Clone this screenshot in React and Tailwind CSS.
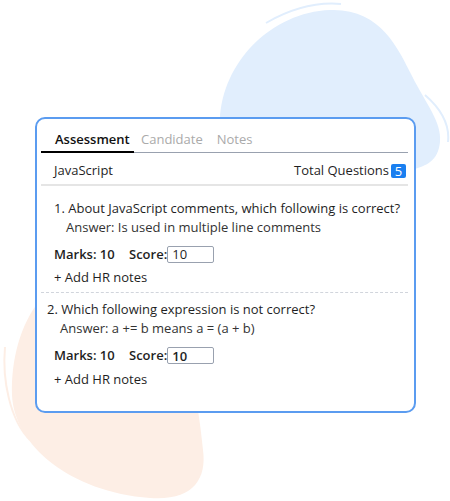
import React from 'react';

const questions = [
    {
        id: 1,
        text: '1. About JavaScript comments, which following is correct?',
        answer: 'Answer: Is used in multiple line comments',
        marks: 10,
        score: '10',
        qPad: 'pl-[13px]',
        aPad: 'pl-[25px]',
    },
    {
        id: 2,
        text: '2. Which following expression is not correct?',
        answer: 'Answer: a += b means a = (a + b)',
        marks: 10,
        score: '10',
        qPad: 'pl-[6px]',
        aPad: 'pl-[19px]',
        bold: true,
    },
];

const Blobs = () => (
    <svg className="absolute inset-0 pointer-events-none" width="450" height="501" viewBox="0 0 450 501">
        {/* blue blob */}
        <path
            d="M220 120 C222 62 272 12 330 10 C380 8 398 48 412 76 C426 104 442 122 440 142 C438 160 428 166 410 170 L230 170 Z"
            fill="#e1eefd"
        />
        <path d="M266 23 C292 8 318 2 341 4" stroke="#e1eefd" strokeWidth="2" fill="none" />
        <path d="M425 95 C440 108 450 124 448 142" stroke="#e1eefd" strokeWidth="2" fill="none" />

        {/* peach blob */}
        <path
            d="M40 300 C20 325 11 360 12 395 C14 445 70 492 150 498 C192 501 207 480 203 450 C200 420 196 395 190 370 C184 340 170 310 150 300 Z"
            fill="#fdeee5"
        />
        <path d="M5 347 C2 380 10 420 30 440" stroke="#fdeee5" strokeWidth="2" fill="none" />
    </svg>
);

const QuestionBlock = ({ q, first, last }) => (
    <div className={`${first ? 'pt-[13px]' : 'pt-[7px]'} ${last ? 'pb-[22px]' : 'pb-[5px] border-b border-dashed border-gray-300'}`}>
        <div className={`${q.qPad} text-[13px] leading-[19px] text-[#1f1f1f]`}>{q.text}</div>
        <div className={`${q.aPad} text-[13px] leading-[19px] text-[#333]`}>{q.answer}</div>

        <div className="pl-[13px] mt-[8px] flex items-center text-[13px] text-[#1f1f1f]">
            <span className="font-semibold w-[75px]">Marks: {q.marks}</span>
            <span className="font-semibold">Score:</span>
            <input
                defaultValue={q.score}
                className={`w-[47px] h-[17px] border border-gray-400 rounded-[2px] px-1 text-[13px] leading-none outline-none ${q.bold ? 'font-semibold' : ''}`}
            />
        </div>

        <div className="pl-[13px] mt-[4px] text-[13px] leading-[19px] text-[#1f1f1f]">+ Add HR notes</div>
    </div>
);

export default function App() {
    return (
        <div className="relative w-[450px] h-[501px] bg-white overflow-hidden" style={{ fontFamily: '"Open Sans", "Noto Sans", sans-serif' }}>
            <Blobs />

            {/* CARD */}
            <div className="relative ml-[35px] mt-[117px] w-[381px] bg-white border-2 border-[#5b9cf0] rounded-[10px] pl-[4px] pr-[6px]">

                {/* TABS */}
                <div className="flex items-end pt-[11px] border-b border-gray-400 text-[13px]">
                    <div className="w-[93px] pl-[14px] pb-[1px] border-b-2 border-black -mb-px font-semibold text-[#111]">
                        Assessment
                    </div>
                    <div className="pl-[7px] pb-[2px] text-[#aaa]">Candidate</div>
                    <div className="pl-[14px] pb-[2px] text-[#aaa]">Notes</div>
                </div>

                {/* HEADER ROW */}
                <div className="flex items-center justify-between h-[33px] pt-[6px] pl-[13px] pr-[2px] border-b-2 border-[#e5e5e5] text-[13px] text-[#1f1f1f]">
                    <span>JavaScript</span>
                    <span className="flex items-center">
                        Total Questions
                        <span className="ml-[2px] w-[15px] h-[14px] rounded-[2px] bg-[#1a7ff0] text-white text-[13px] leading-[14px] text-center">
                            5
                        </span>
                    </span>
                </div>

                {/* QUESTIONS */}
                {questions.map((q, i) => (
                    <QuestionBlock key={q.id} q={q} first={i === 0} last={i === questions.length - 1} />
                ))}
            </div>
        </div>
    );
}
